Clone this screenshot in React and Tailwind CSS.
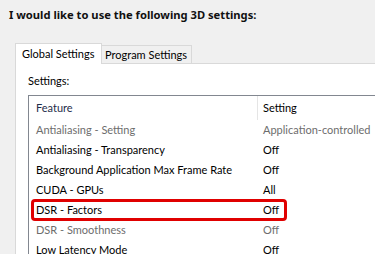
import React from "react";

const rows = [
  { name: "Antialiasing - Setting", value: "Application-controlled", off: true },
  { name: "Antialiasing - Transparency", value: "Off" },
  { name: "Background Application Max Frame Rate", value: "Off" },
  { name: "CUDA - GPUs", value: "All" },
  { name: "DSR - Factors", value: "Off", marked: true },
  { name: "DSR - Smoothness", value: "Off", off: true },
  { name: "Low Latency Mode", value: "Off" },
];

const App = () => {
  return (
    <div
      className="w-[375px] h-[254px] overflow-hidden bg-[#f0f0f0] text-[11px] text-black whitespace-nowrap"
      style={{ fontFamily: 'Lato, "Noto Sans", sans-serif' }}
    >
      <div
        className="h-[43px] pl-[9px] pt-[6px] font-bold text-[11.2px] leading-[18px] text-[#111]"
        style={{ fontFamily: '"Noto Sans", sans-serif' }}
      >
        I would like to use the following 3D settings:
      </div>

      <div className="ml-[15px] flex items-end h-[20px]">
        <div className="relative z-10 w-[87px] h-[21px] -mb-px bg-white border border-b-0 border-[#d9d9d9] pl-[6px] leading-[19px]">
          Global Settings
        </div>
        <div className="w-[90px] h-[18px] bg-[#f0f0f0] border border-l-0 border-b-0 border-[#d9d9d9] pl-[3px] leading-[18px]">
          Program Settings
        </div>
      </div>

      <div className="ml-[15px] h-[200px] bg-white border-l border-t border-[#d9d9d9]">
        <div className="pl-[12px] pt-[9px] h-[31px] leading-[16px]">Settings:</div>
        <div className="ml-[12px] h-[170px] border-l border-t border-[#828790]">
          <div className="flex h-[24px] items-center">
            <div className="w-[228px] shrink-0 pl-[7px] text-[#1e2d4a]">Feature</div>
            <div className="w-px h-full shrink-0 bg-[#e5e5e5]" />
            <div className="pl-[5px]">Setting</div>
          </div>
          {rows.map((r) => (
            <div
              key={r.name}
              className={`relative flex h-[20px] items-center ${r.off ? "text-[#6d6d6d]" : "text-black"}`}
            >
              <div className="w-[229px] shrink-0 pl-[7px]">{r.name}</div>
              <div className="pl-[5px]">{r.value}</div>
              {r.marked && (
                <span className="absolute left-[2px] top-[-1px] w-[256px] h-[22px] border-[3px] border-[#e00000] rounded-[4px]" />
              )}
            </div>
          ))}
        </div>
      </div>
    </div>
  );
};

export default App;
